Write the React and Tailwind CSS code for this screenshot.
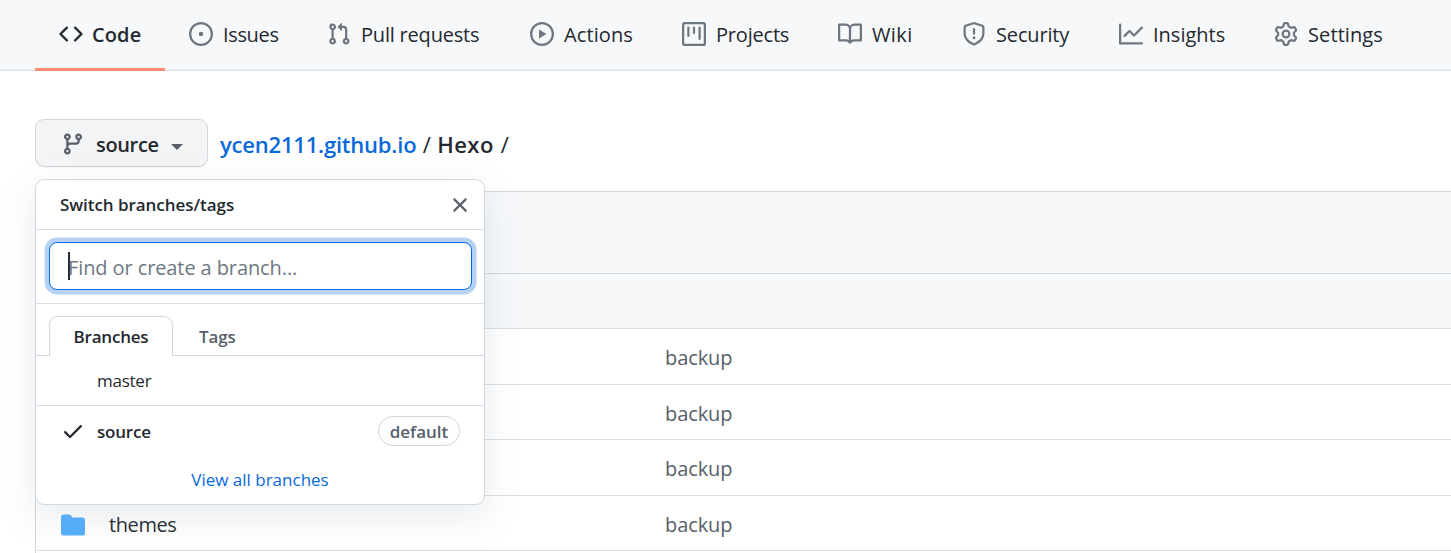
import React from "react";

const PATHS = {
  code: "M4.72 3.22a.75.75 0 011.06 1.06L2.06 8l3.72 3.72a.75.75 0 11-1.06 1.06L.47 8.53a.75.75 0 010-1.06l4.25-4.25zm6.56 0a.75.75 0 10-1.06 1.06L13.94 8l-3.72 3.72a.75.75 0 101.06 1.06l4.25-4.25a.75.75 0 000-1.06l-4.25-4.25z",
  issue: "M8 9.5a1.5 1.5 0 100-3 1.5 1.5 0 000 3zM8 0a8 8 0 100 16A8 8 0 008 0zM1.5 8a6.5 6.5 0 1113 0 6.5 6.5 0 01-13 0z",
  pull: "M7.177 3.073L9.573.677A.25.25 0 0110 .854v4.792a.25.25 0 01-.427.177L7.177 3.427a.25.25 0 010-.354zM3.75 2.5a.75.75 0 100 1.5.75.75 0 000-1.5zm-2.25.75a2.25 2.25 0 113 2.122v5.256a2.251 2.251 0 11-1.5 0V5.372A2.25 2.25 0 011.5 3.25zM11 2.5h-1V4h1a1 1 0 011 1v5.628a2.251 2.251 0 101.5 0V5A2.5 2.5 0 0011 2.5zm1 10.25a.75.75 0 111.5 0 .75.75 0 01-1.5 0zM3.75 12a.75.75 0 100 1.5.75.75 0 000-1.5z",
  play: "M1.5 8a6.5 6.5 0 1113 0 6.5 6.5 0 01-13 0zM8 0a8 8 0 100 16A8 8 0 008 0zM6.379 5.227A.25.25 0 006 5.442v5.117a.25.25 0 00.379.214l4.264-2.559a.25.25 0 000-.428L6.379 5.227z",
  project: "M1.75 0A1.75 1.75 0 000 1.75v12.5C0 15.216.784 16 1.75 16h12.5A1.75 1.75 0 0016 14.25V1.75A1.75 1.75 0 0014.25 0H1.75zM1.5 1.75a.25.25 0 01.25-.25h12.5a.25.25 0 01.25.25v12.5a.25.25 0 01-.25.25H1.75a.25.25 0 01-.25-.25V1.75zM11.75 3a.75.75 0 00-.75.75v7.5a.75.75 0 001.5 0v-7.5a.75.75 0 00-.75-.75zm-8.25.75a.75.75 0 011.5 0v5.5a.75.75 0 01-1.5 0v-5.5zM8 3a.75.75 0 00-.75.75v3.5a.75.75 0 001.5 0v-3.5A.75.75 0 008 3z",
  book: "M0 1.75A.75.75 0 01.75 1h4.253c1.227 0 2.317.59 3 1.501A3.744 3.744 0 0111.006 1h4.245a.75.75 0 01.75.75v10.5a.75.75 0 01-.75.75h-4.507a2.25 2.25 0 00-1.591.659l-.622.621a.75.75 0 01-1.06 0l-.622-.621A2.25 2.25 0 005.258 13H.75a.75.75 0 01-.75-.75V1.75zm8.755 3a2.25 2.25 0 012.25-2.25H14.5v9h-3.757c-.71 0-1.4.201-1.992.572l.004-7.322zm-1.504 7.324l.004-5.073-.002-2.253A2.25 2.25 0 005.003 2.5H1.5v9h3.757a3.75 3.75 0 011.994.574z",
  shield: "M7.467.133a1.75 1.75 0 011.066 0l5.25 1.68A1.75 1.75 0 0115 3.48V7c0 1.566-.32 3.182-1.303 4.682-.983 1.498-2.585 2.813-5.032 3.855a1.7 1.7 0 01-1.33 0c-2.447-1.042-4.049-2.357-5.032-3.855C1.32 10.182 1 8.566 1 7V3.48a1.75 1.75 0 011.217-1.667l5.25-1.68zm.61 1.429a.25.25 0 00-.153 0l-5.25 1.68a.25.25 0 00-.174.238V7c0 1.358.275 2.666 1.057 3.86.784 1.194 2.121 2.34 4.366 3.297a.2.2 0 00.154 0c2.245-.956 3.582-2.104 4.366-3.298C13.225 9.666 13.5 8.36 13.5 7V3.48a.25.25 0 00-.174-.237l-5.25-1.68zM9 10.5a1 1 0 11-2 0 1 1 0 012 0zm-.25-5.75a.75.75 0 10-1.5 0v3a.75.75 0 001.5 0v-3z",
  graph: "M1.5 1.75a.75.75 0 00-1.5 0v12.5c0 .414.336.75.75.75h14.5a.75.75 0 000-1.5H1.5V1.75zm14.28 2.53a.75.75 0 00-1.06-1.06L10 7.94 7.53 5.47a.75.75 0 00-1.06 0L3.22 8.72a.75.75 0 001.06 1.06L7 7.06l2.47 2.47a.75.75 0 001.06 0l5.25-5.25z",
  gear: "M7.429 1.525a6.593 6.593 0 011.142 0c.036.003.108.036.137.146l.289 1.105c.147.56.55.967.997 1.189.174.086.341.183.501.29.417.278.97.423 1.53.27l1.102-.303c.11-.03.175.016.195.046.219.31.41.641.573.989.014.031.022.11-.059.19l-.815.806c-.411.406-.562.957-.53 1.456a4.588 4.588 0 010 .582c-.032.499.119 1.05.53 1.456l.815.806c.08.08.073.159.059.19a6.494 6.494 0 01-.573.99c-.02.029-.086.074-.195.045l-1.103-.303c-.559-.153-1.112-.008-1.529.27-.16.107-.327.204-.5.29-.449.222-.851.628-.998 1.189l-.289 1.105c-.029.11-.101.143-.137.146a6.613 6.613 0 01-1.142 0c-.036-.003-.108-.037-.137-.146l-.289-1.105c-.147-.56-.55-.967-.997-1.189a4.502 4.502 0 01-.501-.29c-.417-.278-.97-.423-1.53-.27l-1.102.303c-.11.03-.175-.016-.195-.046a6.492 6.492 0 01-.573-.989c-.014-.031-.022-.11.059-.19l.815-.806c.411-.406.562-.957.53-1.456a4.587 4.587 0 010-.582c.032-.499-.119-1.05-.53-1.456l-.815-.806c-.08-.08-.073-.159-.059-.19a6.44 6.44 0 01.573-.99c.02-.029.086-.075.195-.045l1.103.303c.559.153 1.112.008 1.529-.27.16-.107.327-.204.5-.29.449-.222.851-.628.998-1.189l.289-1.105c.029-.11.101-.143.137-.146zM8 0c-.236 0-.47.01-.701.03-.743.065-1.29.615-1.458 1.261l-.29 1.106c-.017.066-.078.158-.211.224a5.994 5.994 0 00-.668.386c-.123.082-.233.09-.3.071L3.27 2.776c-.644-.177-1.392.02-1.82.63a7.977 7.977 0 00-.704 1.217c-.315.675-.111 1.422.363 1.891l.815.806c.05.048.098.147.088.294a6.084 6.084 0 000 .772c.01.147-.038.246-.088.294l-.815.806c-.474.469-.678 1.216-.363 1.891.2.428.436.835.704 1.218.428.609 1.176.806 1.82.63l1.103-.303c.066-.019.176-.011.299.071.213.143.436.272.668.386.133.066.194.158.212.224l.289 1.106c.169.646.715 1.196 1.458 1.26a8.094 8.094 0 001.402 0c.743-.064 1.29-.614 1.458-1.26l.29-1.106c.017-.066.078-.158.211-.224a5.98 5.98 0 00.668-.386c.123-.082.233-.09.3-.071l1.102.302c.644.177 1.392-.02 1.82-.63.268-.382.505-.789.704-1.217.315-.675.111-1.422-.364-1.891l-.814-.806c-.05-.048-.098-.147-.088-.294a6.1 6.1 0 000-.772c-.01-.147.039-.246.088-.294l.814-.806c.475-.469.679-1.216.364-1.891a7.992 7.992 0 00-.704-1.218c-.428-.609-1.176-.806-1.82-.63l-1.103.303c-.066.019-.176.011-.299-.071a5.991 5.991 0 00-.668-.386c-.133-.066-.194-.158-.212-.224L10.16 1.29C9.99.645 9.444.095 8.701.031A8.094 8.094 0 008 0zm1.5 8a1.5 1.5 0 11-3 0 1.5 1.5 0 013 0zM11 8a3 3 0 11-6 0 3 3 0 016 0z",
  branch: "M11.75 2.5a.75.75 0 100 1.5.75.75 0 000-1.5zm-2.25.75a2.25 2.25 0 113 2.122V6A2.5 2.5 0 0110 8.5H6a1 1 0 00-1 1v1.128a2.251 2.251 0 11-1.5 0V5.372a2.25 2.25 0 111.5 0v1.836A2.492 2.492 0 016 7h4a1 1 0 001-1v-.628A2.25 2.25 0 019.5 3.25zM4.25 12a.75.75 0 100 1.5.75.75 0 000-1.5zM3.5 3.25a.75.75 0 111.5 0 .75.75 0 01-1.5 0z",
  x: "M3.72 3.72a.75.75 0 011.06 0L8 6.94l3.22-3.22a.75.75 0 111.06 1.06L9.06 8l3.22 3.22a.75.75 0 11-1.06 1.06L8 9.06l-3.22 3.22a.75.75 0 01-1.06-1.06L6.94 8 3.72 4.78a.75.75 0 010-1.06z",
  check: "M13.78 4.22a.75.75 0 010 1.06l-7.25 7.25a.75.75 0 01-1.06 0L2.22 9.28a.75.75 0 011.06-1.06L6 10.94l6.72-6.72a.75.75 0 011.06 0z",
  folder: "M1.75 1A1.75 1.75 0 000 2.75v10.5C0 14.216.784 15 1.75 15h12.5A1.75 1.75 0 0016 13.25v-8.5A1.75 1.75 0 0014.25 3h-6.5a.25.25 0 01-.2-.1l-.9-1.2c-.33-.44-.85-.7-1.4-.7h-3.5z",
};

function Icon({ name, className = "" }) {
  return (
    <svg viewBox="0 0 16 16" fill="currentColor" fillRule="evenodd" className={`size-6 shrink-0 ${className}`}>
      <path d={PATHS[name]} />
    </svg>
  );
}

const TABS = [
  { icon: "issue", label: "Issues", width: "w-[138px]", text: "tracking-[-0.35px]" },
  { icon: "pull", label: "Pull requests", width: "w-[203px]", text: "tracking-[-0.2px]" },
  { icon: "play", label: "Actions", width: "w-[152px]", text: "tracking-[0.1px]" },
  { icon: "project", label: "Projects", width: "w-[156px]", text: "tracking-[-0.2px]" },
  { icon: "book", label: "Wiki", width: "w-[124px]", text: "tracking-[0.4px]" },
  { icon: "shield", label: "Security", width: "w-[157px]", text: "tracking-[-0.15px]" },
  { icon: "graph", label: "Insights", width: "w-[155px]", text: "tracking-normal" },
  { icon: "gear", label: "Settings", width: "w-[130px]", text: "tracking-[0.1px]" },
];

function RepoNav() {
  return (
    <nav className="flex h-[71px] shrink-0 border-b border-[#d8dee4] bg-[#f6f8fa] pl-[35px] shadow-[inset_0_-1px_0_#eaedf1]">
      <a className="-mb-px flex h-[71px] w-[130px] shrink-0 items-center gap-[9px] border-b-3 border-[#fd8c73] pl-6 font-semibold">
        <Icon name="code" />
        <span className="pt-0.5 tracking-[0.1px]">Code</span>
      </a>
      {TABS.map((t) => (
        <a key={t.label} className={`flex h-[68px] shrink-0 items-center gap-2.5 pl-6 ${t.width}`}>
          <Icon name={t.icon} className="text-[#6e7781]" />
          <span className={`whitespace-nowrap pt-0.5 ${t.text}`}>{t.label}</span>
        </a>
      ))}
    </nav>
  );
}

function BranchMenu() {
  return (
    <div className="absolute left-0 top-[60px] z-10 flex h-[326px] w-[450px] flex-col overflow-hidden rounded-[9px] border border-[#d0d7de] bg-white text-[17px] leading-6 shadow-[0_12px_36px_rgba(140,149,159,0.2)]">
      <div className="flex h-[50px] shrink-0 items-center justify-between border-b border-[#d8dee4] pl-6 pr-3">
        <span className="font-semibold tracking-[-0.05px]">Switch branches/tags</span>
        <Icon name="x" className="text-[#57606a]" />
      </div>
      <div className="h-[74px] shrink-0 border-b border-[#d8dee4] px-[13px] pr-3 pt-3">
        <div className="flex h-12 items-center rounded-[8px] border-[1.5px] border-[#0969da] bg-white pl-[18px] text-[20px] text-[#6e7781] shadow-[0_0_0_4.5px_#b5d1f4]">
          <span className="-mr-0.5 h-7 w-0.5 bg-[#24292f]" />
          <span className="whitespace-nowrap pt-[3px] tracking-[-0.1px]">Find or create a branch...</span>
        </div>
      </div>
      <div className="flex h-[52px] shrink-0 pt-3 font-semibold">
        <div className="w-[13px] border-b border-[#d0d7de]" />
        <div className="flex w-[124px] items-center justify-center rounded-t-[9px] border border-b-0 border-[#d0d7de] tracking-[-0.2px]">
          Branches
        </div>
        <div className="flex flex-1 items-center border-b border-[#d0d7de] pl-[26px] pt-0.5 tracking-[-0.1px] text-[#57606a]">Tags</div>
      </div>
      <div className="flex h-[50px] shrink-0 items-center border-b border-[#d8dee4] pl-[61px] tracking-[-0.25px]">master</div>
      <div className="flex h-[52px] shrink-0 items-center pb-0.5 pl-[25px] pr-6 font-semibold">
        <Icon name="check" />
        <span className="ml-3 flex-1 pt-0.5 tracking-[-0.2px]">source</span>
        <span className="flex h-[30px] w-[82px] items-center justify-center rounded-full border border-[#d0d7de] pt-px text-[#57606a]">
          default
        </span>
      </div>
      <div className="flex h-11 shrink-0 items-center justify-center text-[#0969da]">View all branches</div>
    </div>
  );
}

function PathBar() {
  return (
    <div className="relative mt-12 flex h-12 shrink-0 items-center">
      <button className="flex h-12 w-[173px] items-center rounded-[9px] border border-[#d4d7da] bg-[#f3f4f6] pl-[25px] font-semibold shadow-[0_1px_0_rgba(27,31,36,0.04)]">
        <Icon name="branch" className="mt-0.5 text-[#57606a]" />
        <span className="ml-[11px] pt-[3px] tracking-[-0.35px]">source</span>
        <svg viewBox="0 0 12 6" className="ml-3 mt-2 h-1.5 w-3 fill-[#57606a]">
          <path d="M0 0h12L6 6z" />
        </svg>
      </button>
      <div className="ml-3 flex items-center whitespace-pre pt-0.5 text-[22px]">
        <span className="font-semibold tracking-[-0.2px] text-[#0969da]">ycen2111.github.io</span>
        <span className="w-[21px] text-center">/</span>
        <span className="font-semibold tracking-[0.4px]">Hexo</span>
        <span className="w-[22px] text-center">/</span>
      </div>
      <BranchMenu />
    </div>
  );
}

const ROWS = [
  { name: "", height: "h-14" },
  { name: "", height: "h-[55px]" },
  { name: "", height: "h-14" },
  { name: "themes", height: "h-[55px]" },
];

function FileTable() {
  return (
    <div className="mt-6 flex grow flex-col border-l border-t border-[#d0d7de]">
      <div className="h-[82px] shrink-0 border-b border-[#d0d7de] bg-[#f6f8fa]" />
      <div className="h-[55px] shrink-0 border-b border-[#d8dee4] bg-[#f6f8fa]" />
      {ROWS.map((r, i) => (
        <div key={i} className={`ml-px flex shrink-0 items-center border-b border-[#d8dee4] pl-6 pt-[3px] ${r.height}`}>
          <div className="flex w-[604px] items-center gap-6">
            {r.name && <Icon name="folder" className="text-[#54aeff]" />}
            <span className="tracking-[-0.4px]">{r.name}</span>
          </div>
          <span className="tracking-[-0.1px] text-[#57606a]">backup</span>
        </div>
      ))}
    </div>
  );
}

export default function App() {
  return (
    <div className="flex h-[553px] w-[1451px] flex-col overflow-hidden bg-white font-['Open_Sans','Noto_Sans',sans-serif] text-[20px] leading-7 text-[#24292f]">
      <RepoNav />
      <main className="flex grow flex-col pl-[35px]">
        <PathBar />
        <FileTable />
      </main>
    </div>
  );
}
